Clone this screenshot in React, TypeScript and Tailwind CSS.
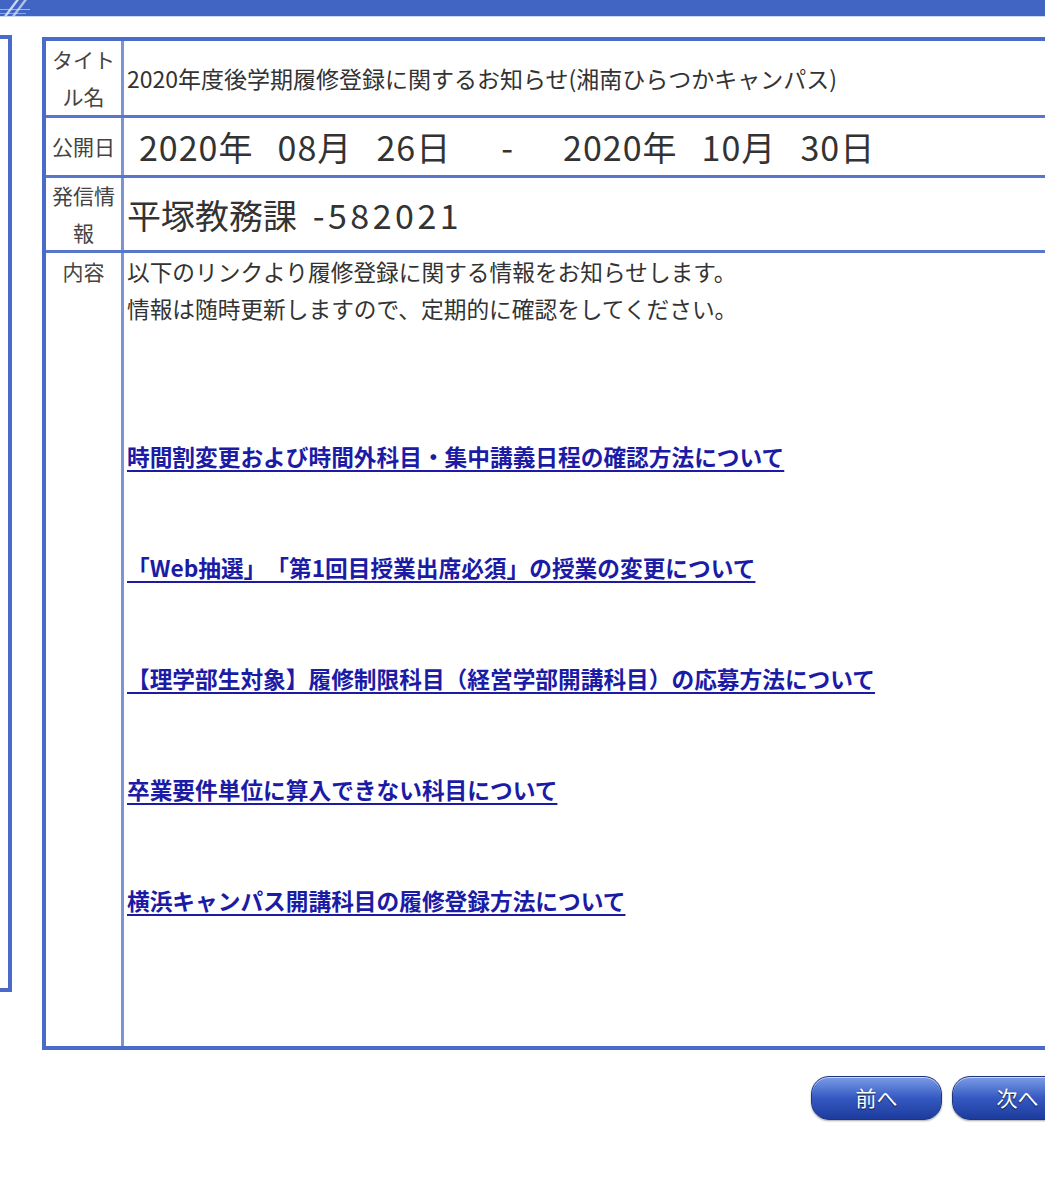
import React from 'react'

const FONT = '"Noto Sans CJK JP", "Noto Sans", sans-serif'

const links = [
  '時間割変更および時間外科目・集中講義日程の確認方法について',
  '「Web抽選」「第1回目授業出席必須」の授業の変更について',
  '【理学部生対象】履修制限科目（経営学部開講科目）の応募方法について',
  '卒業要件単位に算入できない科目について',
  '横浜キャンパス開講科目の履修登録方法について',
]

function Label({ children, top = false }: { children: React.ReactNode; top?: boolean }) {
  return (
    <div
      className={`w-[78px] shrink-0 border-r-[3px] border-[#7a94d4] px-[2px] text-center text-[21px] leading-[37px] text-[#444] flex justify-center ${top ? 'items-start' : 'items-center'}`}
    >
      <span className="block w-[66px] break-all">{children}</span>
    </div>
  )
}

function NavButton({ label }: { label: string }) {
  return (
    <button
      className="h-[44px] w-[131px] shrink-0 rounded-[18px] border border-[#1d347e] bg-gradient-to-b from-[#7d9ce6] via-[#3559c2] to-[#1d3b9c] text-[21px] text-white shadow-[inset_0_1px_0_rgba(255,255,255,0.6),0_1px_2px_rgba(0,0,0,0.35)] [text-shadow:0_1px_1px_rgba(0,0,0,0.7)]"
    >
      {label}
    </button>
  )
}

export default function App() {
  return (
    <div
      className="w-[1045px] min-h-[1200px] overflow-hidden bg-white [text-spacing-trim:space-all]"
      style={{ fontFamily: FONT }}
    >
      {/* Top bar */}
      <div className="relative h-[17px] bg-[#4165c2] border-b border-[#c9d7f0]">
        <svg className="absolute left-0 top-0" width="34" height="16" viewBox="0 0 34 16">
          <path d="M4 16 L16 0 L19 0 L7 16 Z" fill="#dfe8fa" opacity="0.85" />
          <path d="M12 16 L24 0 L27 0 L15 16 Z" fill="#dfe8fa" opacity="0.7" />
          <path d="M0 9 L30 9 L30 10 L0 10 Z" fill="#dfe8fa" opacity="0.6" />
          <path d="M0 13 L26 13 L26 14 L0 14 Z" fill="#dfe8fa" opacity="0.5" />
        </svg>
      </div>

      <div className="mt-[18px] flex items-start">
        {/* Left side panel edge */}
        <div className="h-[957px] w-[12px] shrink-0 border-y-4 border-r-4 border-[#4a6cc8]" />

        {/* Notice table */}
        <div className="ml-[30px] mt-[2px] w-[1100px] shrink-0 border-4 border-[#4a6cc8] text-[#333]">
          <div className="flex h-[77px] border-b-[3px] border-[#5877cc]">
            <Label>タイトル名</Label>
            <div className="flex items-center pl-[3px] text-[23px]">
              2020年度後学期履修登録に関するお知らせ(湘南ひらつかキャンパス)
            </div>
          </div>

          <div className="flex h-[60px] border-b-[3px] border-[#5877cc]">
            <Label>公開日</Label>
            <div className="flex items-center pl-[15px] text-[34px] whitespace-pre tracking-[1px]">
              <span className="[word-spacing:15.5px]">2020年 08月 26日</span>
              <span className="ml-[50px] mr-[49px]">-</span>
              <span className="[word-spacing:15.5px]">2020年 10月 30日</span>
            </div>
          </div>

          <div className="flex h-[75px] border-b-[3px] border-[#5877cc]">
            <Label>発信情報</Label>
            <div className="flex items-center pl-[3px] text-[34px] whitespace-pre">
              平塚教務課 <span className="ml-[8px] tracking-[3.5px]">-582021</span>
            </div>
          </div>

          <div className="flex h-[793px]">
            <Label top>内容</Label>
            <div className="pl-[3px] text-[22.7px] leading-[37px]">
              <p>以下のリンクより履修登録に関する情報をお知らせします。</p>
              <p>情報は随時更新しますので、定期的に確認をしてください。</p>
              <div className="mt-[111px] flex flex-col gap-[74px]">
                {links.map((l) => (
                  <a key={l} href="#" className="font-bold text-[#1b1ba6] underline decoration-[2px] underline-offset-[4px]">
                    {l}
                  </a>
                ))}
              </div>
            </div>
          </div>
        </div>
      </div>

      {/* Pager */}
      <div className="mt-[26px] flex gap-[10px] pl-[811px]">
        <NavButton label="前へ" />
        <NavButton label="次へ" />
      </div>
    </div>
  )
}
